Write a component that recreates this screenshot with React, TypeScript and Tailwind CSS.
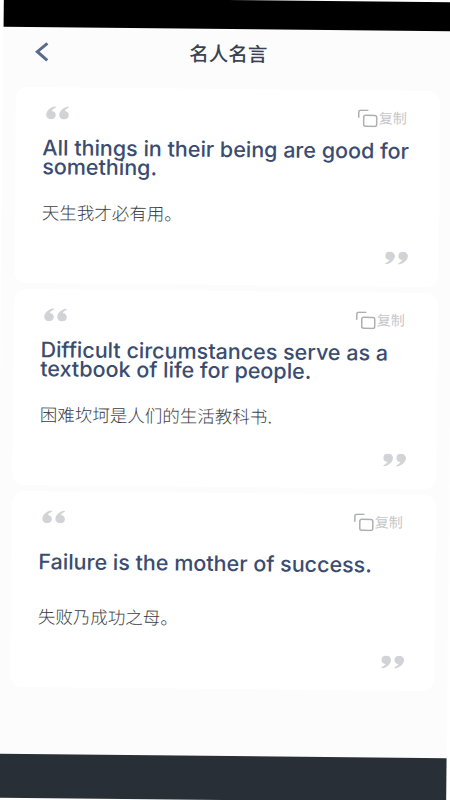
const quotes = [
  { en: "All things in their being are good for something.", zh: "天生我才必有用。" },
  { en: "Difficult circumstances serve as a textbook of life for people.", zh: "困难坎坷是人们的生活教科书." },
  { en: "Failure is the mother of success.", zh: "失败乃成功之母。" },
];

function QuoteMark({ flip }: { flip?: boolean }) {
  return (
    <svg width="24" height="13" viewBox="0 0 24 15" preserveAspectRatio="none" className={flip ? "rotate-180" : ""} fill="#d2d3d6">
      <path d="M5.5 15a5 5 0 0 1-5-5C.5 5.500 4 1.500 9.500 0l.6 1.600C7.600 2.800 6.300 4.200 6 5.300a4.900 4.900 0 0 1-.5 9.700z" />
      <path d="M18.500 15a5 5 0 0 1-5-5c0-4.500 3.500-8.500 9-10l.6 1.600c-2.500 1.200-3.800 2.600-4.100 3.700a4.900 4.900 0 0 1-.5 9.700z" />
    </svg>
  );
}

function CopyIcon() {
  return (
    <svg width="21" height="18" viewBox="0 0 21 18" fill="none" stroke="#aeafb2" strokeWidth="1.500">
      <path d="M1 8V3a2 2 0 0 1 2-2h7" strokeLinecap="round" />
      <rect x="6" y="6" width="13" height="11" rx="2" />
    </svg>
  );
}

function QuoteCard({ en, zh }: { en: string; zh: string }) {
  return (
    <div className="h-[196px] rounded-xl bg-white pl-[27px] pr-[26px] pt-[19px]">
      <div className="flex items-start justify-between pl-[3px]">
        <QuoteMark />
        <div className="-mt-px flex items-center pr-[7px] text-sm text-[#c6c7ca]">
          <CopyIcon />
          <span>复制</span>
        </div>
      </div>
      <div className="-mr-4 mt-[12px] flex h-[40px] items-center text-[21.500px] font-medium leading-[19px] text-[#3a4c70]">
        <p>{en}</p>
      </div>
      <p className="mt-[26px] text-[17.500px] font-light leading-5 text-[#3b3e45]">{zh}</p>
      <div className="mt-[25px] flex justify-end pr-[4px]">
        <QuoteMark flip />
      </div>
    </div>
  );
}

export default function App() {
  return (
    <div className="h-[800px] w-[450px] overflow-hidden bg-white font-['Inter','Noto_Sans_CJK_SC',sans-serif]">
      <div className="flex h-[800px] w-[450px] rotate-[0.55deg] flex-col bg-[#fcfcfc]">
        <div className="h-[29px] bg-black" />
        <div className="relative flex h-[60px] items-center justify-center">
          <svg width="15" height="21" viewBox="0 0 15 21" fill="none" stroke="#5a6a8a" strokeWidth="3" className="absolute left-[31px] top-[14px]">
            <path d="M13 2 3 10.500l10 8.500" />
          </svg>
          <h1 className="-mt-2 text-[19.500px] font-medium text-[#3a4150]">名人名言</h1>
        </div>
        <div className="flex flex-1 flex-col gap-[6px] px-[13px]">
          {quotes.map((q) => (
            <QuoteCard key={q.en} en={q.en} zh={q.zh} />
          ))}
        </div>
        <div className="h-[44px] bg-[#292f36]" />
      </div>
    </div>
  );
}
